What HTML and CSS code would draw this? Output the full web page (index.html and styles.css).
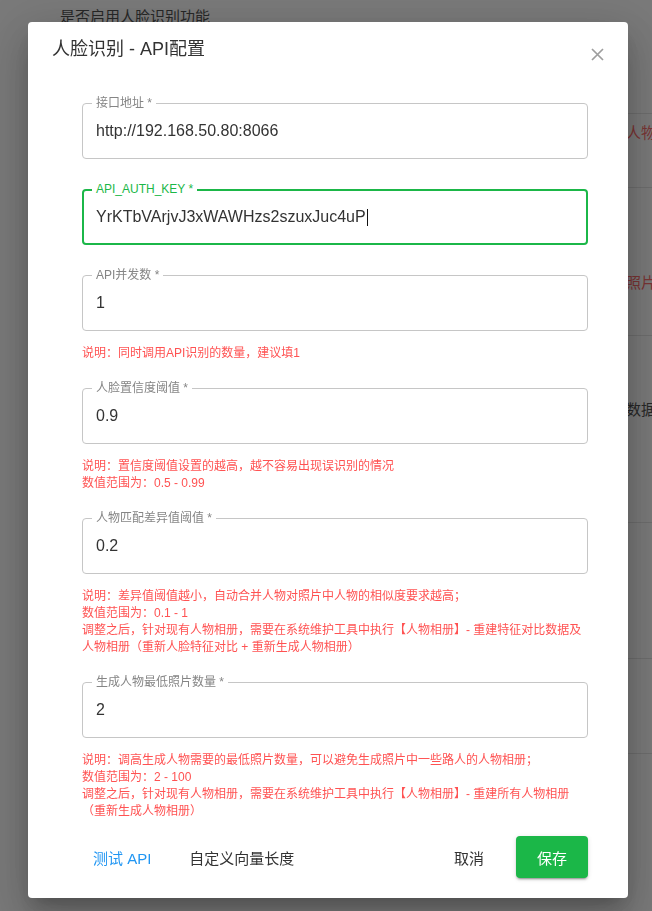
FILE: index.html
```html
<!DOCTYPE html>
<html lang="zh-CN">
	<head>
		<meta charset="utf-8">
		<title>人脸识别 - API配置</title>
		<link rel="stylesheet" href="styles.css">
	</head>
	<body>
		<!-- settings page behind the dialog -->
		<div class="page">
			<div class="page-title">是否启用人脸识别功能</div>
			<div class="bg-row r1"></div>
			<div class="bg-row r2"><span class="bg-note err">人物相册</span></div>
			<div class="bg-row r3"><span class="bg-note err">照片数量</span></div>
			<div class="bg-row r4"><span class="bg-note">数据库</span></div>
			<div class="bg-row r5"></div>
			<div class="bg-row r6"></div>
		</div>

		<div class="overlay"></div>

		<div class="dialog">
			<div class="dialog-head">
				<div class="dialog-title">人脸识别 - API配置</div>
				<button type="button" class="close" aria-label="关闭">
					<svg width="13" height="13" viewBox="0 0 13 13">
						<path d="M1 1L12 12M12 1L1 12" stroke="#9e9e9e" stroke-width="1.7" fill="none"/>
					</svg>
				</button>
			</div>

			<div class="form">
				<div class="group">
					<div class="field">
						<span class="field-label">接口地址 *</span>
						http://192.168.50.80:8066
					</div>
				</div>
				<div class="group">
					<div class="field focused">
						<span class="field-label">API_AUTH_KEY *</span>
						YrKTbVArjvJ3xWAWHzs2szuxJuc4uP<span class="caret"></span>
					</div>
				</div>
				<div class="group with-hint">
					<div class="field">
						<span class="field-label">API并发数 *</span>
						1
					</div>
					<div class="hint">说明：同时调用API识别的数量，建议填1</div>
				</div>
				<div class="group with-hint">
					<div class="field">
						<span class="field-label">人脸置信度阈值 *</span>
						0.9
					</div>
					<div class="hint">
						说明：置信度阈值设置的越高，越不容易出现误识别的情况<br>
						数值范围为：0.5 - 0.99
					</div>
				</div>
				<div class="group with-hint">
					<div class="field">
						<span class="field-label">人物匹配差异值阈值 *</span>
						0.2
					</div>
					<div class="hint">
						说明：差异值阈值越小，自动合并人物对照片中人物的相似度要求越高；<br>
						数值范围为：0.1 - 1<br>
						调整之后，针对现有人物相册，需要在系统维护工具中执行【人物相册】- 重建特征对比数据及<br>
						人物相册（重新人脸特征对比 + 重新生成人物相册）
					</div>
				</div>
				<div class="group with-hint">
					<div class="field">
						<span class="field-label">生成人物最低照片数量 *</span>
						2
					</div>
					<div class="hint">
						说明：调高生成人物需要的最低照片数量，可以避免生成照片中一些路人的人物相册；<br>
						数值范围为：2 - 100<br>
						调整之后，针对现有人物相册，需要在系统维护工具中执行【人物相册】- 重建所有人物相册<br>
						（重新生成人物相册）
					</div>
				</div>
			</div>

			<div class="dialog-actions">
				<button type="button" class="btn blue">测试 API</button>
				<button type="button" class="btn">自定义向量长度</button>
				<div class="spacer"></div>
				<button type="button" class="btn cancel">取消</button>
				<button type="button" class="btn save">保存</button>
			</div>
		</div>
	</body>
</html>
```

FILE: styles.css
```css
* {
	box-sizing:border-box;
	margin:0;
	padding:0;
}
body {
	font-family:"Liberation Sans", "Noto Sans CJK SC", sans-serif;
	color:#333;
	background:#fff;
	height:911px;
	overflow:hidden;
}

/* page behind */
.page {
	padding:6px 0 0 60px;
	font-size:15px;
	white-space:nowrap;
}
.page-title {
	line-height:22px;
	color:#333;
}
.bg-row {
	border-bottom:1px solid #e0e0e0;
	font-size:15px;
	line-height:17px;
}
.bg-note {
	display:block;
	padding-left:566px;
	color:#333;
}
.bg-note.err {
	color:#ff5252;
}
.r1 { height:86px; }
.r2 { height:74px; padding-top:10px; }
.r3 { height:148px; padding-top:86px; }
.r4 { height:187px; padding-top:65px; }
.r5 { height:136px; }
.r6 { height:95px; }

.overlay {
	position:fixed;
	top:0;
	left:0;
	right:0;
	bottom:0;
	background:rgba(33,33,33,0.6);
}

/* dialog */
.dialog {
	position:fixed;
	top:22px;
	left:28px;
	width:600px;
	background:#fff;
	border-radius:4px;
	box-shadow:0 11px 15px -7px rgba(0,0,0,0.2), 0 24px 38px 3px rgba(0,0,0,0.14), 0 9px 46px 8px rgba(0,0,0,0.12);
}
.dialog-head {
	display:flex;
	justify-content:space-between;
	align-items:flex-start;
	padding:13px 19px 0 24px;
}
.dialog-title {
	font-size:18px;
	line-height:28px;
	color:#333;
}
.close {
	width:24px;
	height:24px;
	margin-top:7px;
	border:0;
	background:none;
	display:flex;
	align-items:center;
	justify-content:center;
}

.form {
	padding:37px 40px 0 54px;
}
.group {
	margin-bottom:30px;
}
.group.with-hint {
	margin-bottom:26px;
}
.group:last-child {
	margin-bottom:0;
}
.field {
	position:relative;
	height:56px;
	border:1px solid #c6c6c6;
	border-radius:4px;
	padding:0 13px;
	display:flex;
	align-items:center;
	font-size:16px;
	color:#333;
	white-space:nowrap;
}
.field.focused {
	border:2px solid #1bb748;
	padding:0 12px;
}
.field-label {
	position:absolute;
	top:-8px;
	left:9px;
	padding:0 4px;
	background:#fff;
	font-size:12px;
	line-height:14px;
	color:#858585;
}
.field.focused .field-label {
	top:-9px;
	left:8px;
	color:#1bb748;
}
.caret {
	display:inline-block;
	width:1px;
	height:17px;
	margin-left:1px;
	background:#111;
}
.hint {
	margin-top:14px;
	font-size:12px;
	line-height:17px;
	color:#ff5252;
	white-space:nowrap;
}

.dialog-actions {
	display:flex;
	align-items:center;
	padding:16px 40px 20px 46px;
}
.btn {
	height:42px;
	padding:0 19px;
	border:0;
	border-radius:4px;
	background:none;
	font-family:inherit;
	font-size:15px;
	color:#333;
	display:flex;
	align-items:center;
}
.btn.blue {
	color:#2196f3;
}
.spacer {
	flex:1;
}
.btn.cancel {
	margin-right:13px;
}
.btn.save {
	padding:0 21px;
	background:#1bb748;
	color:#fff;
	box-shadow:0 3px 1px -2px rgba(0,0,0,0.2), 0 2px 2px 0 rgba(0,0,0,0.14), 0 1px 5px 0 rgba(0,0,0,0.12);
}
```
